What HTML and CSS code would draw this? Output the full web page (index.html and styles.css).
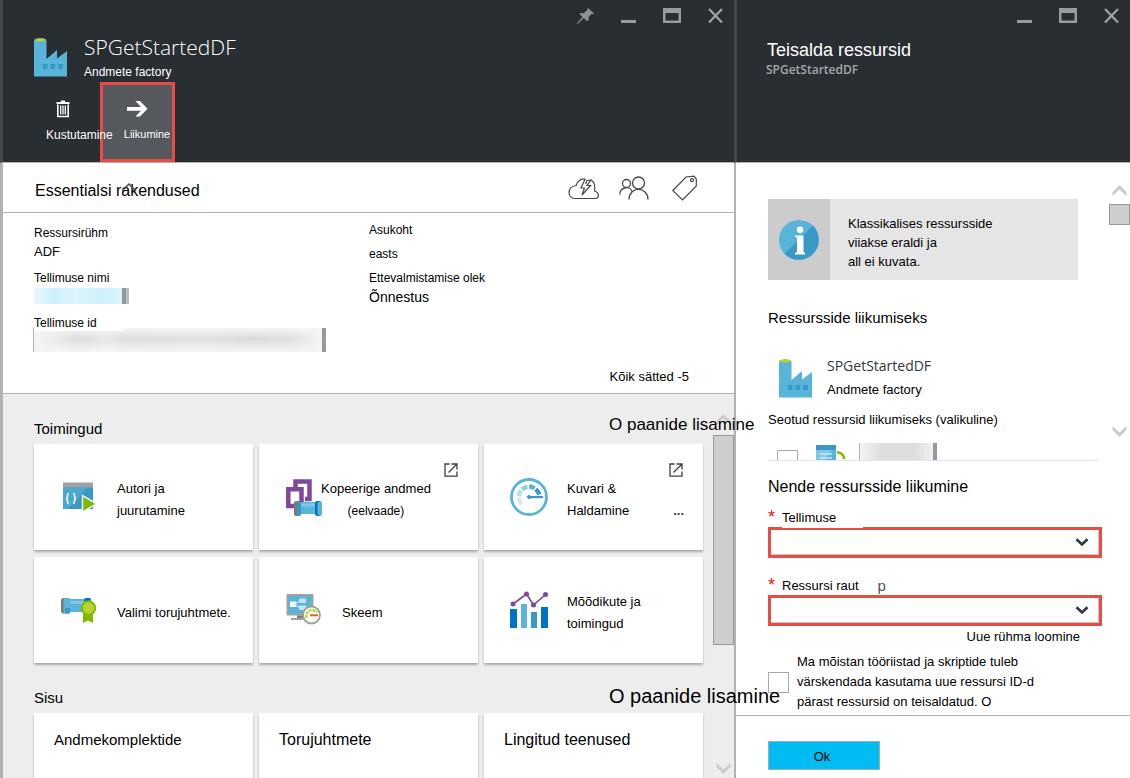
FILE: index.html
```html
<!DOCTYPE html>
<html lang="et">
<head>
<meta charset="utf-8">
<title>SPGetStartedDF</title>
<meta name="viewport" content="width=device-width, initial-scale=1">
<link rel="stylesheet" href="styles.css">
</head>
<body>
<svg class="defs" aria-hidden="true">
  <symbol id="factory" viewBox="0 0 33 39">
    <path fill="#59b4d9" d="M0 3H12.500V21L23 12V20.500L33 13V38.500H0z"/>
    <path fill="#3999c6" d="M9 26h4.500v5H9zM16.500 26H21v5h-4.500zM24 26h5v5h-5z"/>
    <ellipse cx="6.300" cy="2.500" rx="6.300" ry="2.200" fill="#59b4d9"/>
    <ellipse cx="6.300" cy="1.800" rx="5.300" ry="1.600" fill="#b8d432"/>
  </symbol>
  <symbol id="minimize" viewBox="0 0 15 16"><path fill="#999c9e" d="M0 12h15v3H0z"/></symbol>
  <symbol id="maximize" viewBox="0 0 18 16"><path fill="#999c9e" fill-rule="evenodd" d="M0 0h18v15H0zM2.500 5v7.500h13V5z"/></symbol>
  <symbol id="close" viewBox="0 0 15 16"><path fill="none" stroke="#a1a4a6" stroke-width="2.200" d="M1 1L14 14.500M14 1L1 14.500"/></symbol>
  <symbol id="up" viewBox="0 0 15 11"><path fill="currentColor" d="M7.500 0L14.500 7V11L7.500 4.500L.5 11V7z"/></symbol>
  <symbol id="down" viewBox="0 0 15 11"><path fill="currentColor" d="M7.500 11L14.500 4V0L7.500 6.500L.5 0V4z"/></symbol>
  <symbol id="external" viewBox="0 0 14 14"><path fill="none" stroke="#3b4046" stroke-width="1.300" d="M5.500 1H1V13.200H13V8.500M7.500 1H13V6.500M13 1L4.500 9.500"/></symbol>
</svg>
<main class="portal">
  <section class="blade blade-main">
    <header class="blade-head">
      <div class="controls">
        <button aria-label="Kinnita"><svg width="17" height="16" viewBox="0 0 17 16"><path fill="#8f9294" d="M11 0L17 5.500L15.500 6.200L14.800 5.800L11.500 9.200L11.600 12L10.300 13.200L6.800 10L1 15.800L0 16L.5 14.800L5.600 8.900L2.500 5.900L3.600 5L6.600 5.200L10.500 2L10.200 1z"/></svg></button>
        <button aria-label="Minimeeri"><svg width="15" height="16"><use href="#minimize"/></svg></button>
        <button aria-label="Maksimeeri"><svg width="18" height="16"><use href="#maximize"/></svg></button>
        <button aria-label="Sule"><svg width="15" height="16"><use href="#close"/></svg></button>
      </div>
      <div class="title-row">
        <svg width="33" height="39"><use href="#factory"/></svg>
        <div>
          <h1 class="title">SPGetStartedDF</h1>
          <p class="kind">Andmete factory</p>
        </div>
      </div>
      <div class="toolbar">
        <button class="tool tool-delete">
          <svg width="14" height="18" viewBox="0 0 14 18"><path fill="#fff" d="M5 .5h4V2h4.500v2H.5V2H5z"/><path fill="none" stroke="#fff" stroke-width="1.600" d="M1.800 4.500V16.500H12.200V4.500"/><path stroke="#fff" stroke-width="1.300" d="M4.700 5.500v9M7 5.500v9M9.300 5.500v9"/></svg>
          <span>Kustutamine</span>
        </button>
        <button class="tool tool-move">
          <svg width="21" height="18" viewBox="0 0 21 18"><path fill="#fff" d="M0 7H14L8.500 1H13L20.500 8.800L13 16.500H8.500L14 10.800H0z"/></svg>
          <span>Liikumine</span>
        </button>
      </div>
    </header>

    <div class="essentials-bar">
      <h2 class="essentials-title">Essentialsi rakendused
        <svg class="collapse" width="16" height="9" viewBox="0 0 16 9"><path fill="none" stroke="#4a4d52" stroke-width="1.500" d="M1 8L8 1L15 8"/></svg>
      </h2>
      <div class="essentials-icons">
        <svg width="31" height="26" viewBox="0 0 31 26" fill="none" stroke="#44484e" stroke-width="1.200"><path d="M14 23.500H6.500C-.5 23-1.500 12 8 10.500C9 6 13 3.500 17 4.200L13 13H16.500L14 20L22.500 10.500H19L23 5L19 5.500L17.500 9M23.500 5.500C26 7 27.500 10 26.500 16C31.500 17.500 31.500 23 27.500 23.500H14"/></svg>
        <svg width="33" height="26" viewBox="0 0 33 26" fill="none" stroke="#44484e" stroke-width="1.300"><circle cx="7.500" cy="8.500" r="4"/><circle cx="19.500" cy="8" r="6"/><path d="M.8 19.500C1 11 12 11 13 16.500M10 24.500C10 11 29 11 29 24.500"/></svg>
        <svg width="25" height="26" viewBox="0 0 25 26" fill="none" stroke="#44484e" stroke-width="1.200"><path d="M.8 15.500L14 2L22 1.200L24.300 4V11L10.500 25z"/><circle cx="20" cy="5.200" r="1.500"/></svg>
      </div>
    </div>

    <div class="essentials">
      <div class="facts">
        <dl class="facts-col">
          <dt>Ressursirühm</dt><dd class="value-md">ADF</dd>
          <dt class="spaced">Tellimuse nimi</dt><dd class="blur blur-blue"></dd>
          <dt class="tab">Tellimuse id</dt><dd class="blur blur-gray"></dd>
        </dl>
        <dl class="facts-col facts-right">
          <dt>Asukoht</dt><dd class="value-sm">easts</dd>
          <dt class="near">Ettevalmistamise olek</dt><dd class="value-lg">Õnnestus</dd>
        </dl>
      </div>
      <a class="all-settings" href="#">Kõik sätted -5</a>
    </div>

    <div class="lens">
      <div class="lens-content">
        <div class="lens-head"><h2>Toimingud</h2><a class="add-tile" href="#">O paanide lisamine</a></div>
        <div class="tiles">
          <a class="tile" href="#">
            <svg width="40" height="40" viewBox="0 0 40 40"><path fill="#a0a1a2" d="M3 5.500h30V12H3z"/><path fill="#3999c6" d="M3 10.500h30V32H3z"/><path fill="#59b4d9" opacity=".6" d="M3 10.500H28L8 32H3z"/><path fill="none" stroke="#fff" stroke-width="1.600" d="M8.800 16.500C6.500 16.500 8.500 21.500 6 21.500C8.500 21.500 6.500 26.500 8.800 26.500M13.200 16.500C15.500 16.500 13.500 21.500 16 21.500C13.500 21.500 15.500 26.500 13.200 26.500"/><path fill="#7fba00" stroke="#fff" stroke-width="1.400" d="M22.500 18.500L36.500 26.800L22.500 35z"/></svg>
            <span>Autori ja<br>juurutamine</span>
          </a>
          <a class="tile tile-copy" href="#">
            <svg width="40" height="40" viewBox="0 0 40 40"><path fill="none" stroke="#804998" stroke-width="4.500" d="M10.500 11V4.500H24.500V22H20"/><path fill="none" stroke="#804998" stroke-width="4.500" d="M3.300 12.300H16.500V29H3.300z"/><path fill="#59b4d9" d="M10 25h25v12H10z"/><path fill="#83c6e3" d="M13 26.500h19v3H13z"/><rect x="9" y="24" width="5.500" height="15" rx="2" fill="#7a7a7a"/><rect x="12" y="24" width="4" height="15" rx="1.500" fill="#3999c6"/><rect x="30" y="24" width="6.500" height="15" rx="2.500" fill="#0072c6"/><rect x="32.500" y="24.500" width="4.500" height="14" rx="2" fill="#59b4d9"/></svg>
            <span>Kopeerige andmed<br><small>(eelvaade)</small></span>
            <svg class="external" width="14" height="14"><use href="#external"/></svg>
          </a>
          <a class="tile" href="#">
            <svg width="40" height="40" viewBox="0 0 40 40"><circle cx="19" cy="20" r="17.500" fill="#fff" stroke="#59b4d9" stroke-width="2.800"/><g fill="none" stroke-width="4.500"><path stroke="#d3eaf5" d="M11.500 27.500A10.500 10.500 0 0 1 9 21"/><path stroke="#b5dded" d="M9 19.500A10.500 10.500 0 0 1 11 13.500"/><path stroke="#8fcbe5" d="M12 12.500A10.500 10.500 0 0 1 17.500 9.800"/><path stroke="#59b4d9" d="M19 9.600A10.500 10.500 0 0 1 24.500 11.300"/><path stroke="#3999c6" d="M25.700 12.200A10.500 10.500 0 0 1 29.300 17.500"/></g><circle cx="19" cy="20" r="2" fill="#3999c6"/><path fill="#3999c6" d="M19 19h14v2.200H19z"/></svg>
            <span>Kuvari &amp;<br>Haldamine</span>
            <svg class="external" width="14" height="14"><use href="#external"/></svg>
            <b class="more">...</b>
          </a>
          <a class="tile" href="#">
            <svg width="40" height="40" viewBox="0 0 40 40"><path fill="#59b4d9" d="M4 9h27v13H4z"/><path fill="#83c6e3" d="M9 11h20v3H9z"/><rect x="1" y="8" width="6" height="15.500" rx="2.500" fill="#7a7a7a"/><rect x="3.500" y="8" width="7" height="15.500" rx="2" fill="#59b4d9"/><path fill="#3999c6" d="M5 18h5v5.500H5z"/><rect x="24" y="8" width="7" height="6" rx="2" fill="#0072c6"/><path fill="#7fba00" d="M23 24h10v9l-5-2.500L23 33z"/><circle cx="28.500" cy="18" r="6.700" fill="#b8d432" stroke="#7fba00" stroke-width="2"/></svg>
            <span>Valimi torujuhtmete.</span>
          </a>
          <a class="tile" href="#">
            <svg width="40" height="40" viewBox="0 0 40 40"><rect x="1.500" y="4" width="27" height="21.500" rx="1" fill="#a0a1a2"/><path fill="#59b4d9" d="M3.500 6h23v17.500h-23z"/><path fill="#fff" d="M5 11.500h6v5.500H5z"/><path fill="#c5e3f0" d="M14 8.500h7V13h-7zM14 15.500h7V20h-7z"/><path fill="none" stroke="#c5e3f0" stroke-width="1.200" d="M15 10.500L10 14.500L15 18"/><path fill="#7a7a7a" d="M12 25.500h8v3h-8z"/><path fill="#a0a1a2" d="M6 28h14v2H6z"/><circle cx="26.500" cy="25" r="8.500" fill="#fff" stroke="#a0a1a2" stroke-width="1.800"/><path fill="none" stroke="#b8d432" stroke-width="2.500" stroke-dasharray="3 .8" d="M21.500 28A6 6 0 0 1 32 22.500"/><path stroke="#e8611a" stroke-width="2" d="M25 25.300h8"/></svg>
            <span>Skeem</span>
          </a>
          <a class="tile" href="#">
            <svg width="40" height="40" viewBox="0 0 40 40"><path fill="#0072c6" d="M0 19h7v19H0zM31 17h7v21h-7z"/><path fill="#59b4d9" d="M11 14h6v24h-6z"/><path fill="#3999c6" d="M21 22h6v16h-6z"/><path fill="none" stroke="#804998" stroke-width="1.600" d="M3 14L16.500 4L23.500 15L35.500 4.500"/><g fill="#804998"><circle cx="3" cy="14" r="2.500"/><circle cx="16.500" cy="4" r="2.500"/><circle cx="23.500" cy="15" r="2.500"/><circle cx="35.500" cy="4.500" r="2.500"/></g></svg>
            <span>Mõõdikute ja<br>toimingud</span>
          </a>
        </div>
        <div class="lens-head"><h2>Sisu</h2><a class="add-tile add-tile-lg" href="#">O paanide lisamine</a></div>
        <div class="tiles tiles-content">
          <a class="card card-sm" href="#">Andmekomplektide</a>
          <a class="card" href="#">Torujuhtmete</a>
          <a class="card" href="#">Lingitud teenused</a>
        </div>
      </div>
      <div class="scroll scroll-main" aria-hidden="true">
        <svg width="15" height="11"><use href="#up"/></svg>
        <i class="thumb"></i>
        <svg width="15" height="11"><use href="#down"/></svg>
      </div>
    </div>
  </section>

  <section class="blade blade-move">
    <header class="blade-head">
      <div class="controls">
        <button aria-label="Minimeeri"><svg width="15" height="16"><use href="#minimize"/></svg></button>
        <button aria-label="Maksimeeri"><svg width="18" height="16"><use href="#maximize"/></svg></button>
        <button aria-label="Sule"><svg width="15" height="16"><use href="#close"/></svg></button>
      </div>
      <h1 class="move-title">Teisalda ressursid</h1>
      <p class="move-sub">SPGetStartedDF</p>
    </header>

    <div class="move-body">
      <div class="move-list">
        <div class="notice">
          <div class="notice-icon">
            <svg width="40" height="40" viewBox="0 0 40 40"><circle cx="20" cy="20" r="20" fill="#59b4d9"/><path fill="#3999c6" d="M33.800 5.500A20 20 0 1 1 5.500 33.800z"/><circle cx="21" cy="9.800" r="3.200" fill="#fff"/><path fill="#fff" d="M16 15.500h8.500V32l1.500 1v1.500H16V33l2-1V17.500l-2-.5z"/></svg>
          </div>
          <p>Klassikalises ressursside<br>viiakse eraldi ja<br>all ei kuvata.</p>
        </div>
        <h2 class="list-title">Ressursside liikumiseks</h2>
        <div class="resource">
          <svg width="33" height="39"><use href="#factory"/></svg>
          <div><p class="resource-name">SPGetStartedDF</p><p>Andmete factory</p></div>
        </div>
        <h3 class="related-title">Seotud ressursid liikumiseks (valikuline)</h3>
        <div class="related">
          <input class="check" type="checkbox" aria-label="Seotud ressurss">
          <svg width="30" height="24" viewBox="0 0 30 24"><path fill="#3999c6" d="M0 2h20v6H0z"/><path fill="#59b4d9" d="M0 7h20v17H0z"/><path fill="#83c6e3" d="M0 7h16L4 24H0z"/><path stroke="#fff" stroke-width="1.200" d="M4 11h12M4 15h12"/><path fill="none" stroke="#7fba00" stroke-width="2.500" d="M21 9.500C25 9 28 12 28 16"/></svg>
          <i class="blur blur-item"></i>
        </div>
      </div>
      <div class="scroll scroll-move" aria-hidden="true">
        <svg width="15" height="11"><use href="#up"/></svg>
        <i class="thumb"></i>
        <svg width="15" height="11"><use href="#down"/></svg>
      </div>
    </div>

    <form class="move-form">
      <h2 class="form-title">Nende ressursside liikumine</h2>
      <div class="label-row"><span class="star">*</span><label class="patch" for="sub">Tellimuse</label></div>
      <div class="picker"><select id="sub"><option></option></select><svg width="14" height="9" viewBox="0 0 14 9"><path fill="none" stroke="#32383e" stroke-width="2.600" d="M1.500 1.200L7 6.500L12.500 1.200"/></svg></div>
      <div class="label-row label-next"><span class="star">*</span><label for="group">Ressursi raut</label><span class="tail">p</span></div>
      <div class="picker"><select id="group"><option></option></select><svg width="14" height="9" viewBox="0 0 14 9"><path fill="none" stroke="#32383e" stroke-width="2.600" d="M1.500 1.200L7 6.500L12.500 1.200"/></svg></div>
      <a class="new-group" href="#">Uue rühma loomine</a>
      <div class="consent">
        <input class="check" id="consent" type="checkbox">
        <label for="consent">Ma mõistan tööriistad ja skriptide tuleb<br>värskendada kasutama uue ressursi ID-d<br>pärast ressursid on teisaldatud. O</label>
      </div>
    </form>
    <footer class="move-foot"><button class="ok">Ok</button></footer>
  </section>
</main>
</body>
</html>
```
FILE: styles.css
```css
* { box-sizing: border-box; }
body { margin: 0; font: 13px/18px "Liberation Sans", Arial, sans-serif; color: #000; background: #fff; }
h1, h2, h3, p, dl, dd { margin: 0; font-weight: 400; }
a { color: inherit; text-decoration: none; }
button { border: 0; padding: 0; background: none; color: inherit; font: inherit; }
svg { display: block; flex: none; }
.defs { position: absolute; width: 0; height: 0; }

.portal { display: grid; grid-template-columns: minmax(0, 1fr) 396px; min-height: 100vh; overflow: hidden; }
.blade { display: flex; flex-direction: column; min-width: 0; }
.blade-main { border-left: 3px solid #b2b2b2; }
.blade-move { border-left: 2px solid #b2b2b2; }

.blade-head { min-height: 163px; padding-top: 8px; background: #292e32; border-bottom: 1px solid #b2b2b2; color: #fff; }
.blade-main .blade-head { margin-left: -3px; border-left: 3px solid #43474b; }
.blade-move .blade-head { margin-left: -2px; border-left: 3px solid #43474b; }
.controls { display: flex; justify-content: flex-end; gap: 27px; padding-right: 11px; }
.title-row { display: flex; align-items: center; gap: 17px; margin-top: 9px; padding-left: 31px; }
.title { font: 300 21px/28px "Open Sans", sans-serif; }
.kind { margin-top: 2px; font-size: 12px; }
.toolbar { display: flex; margin-top: 1px; padding-left: 43px; }
.tool { display: flex; flex-direction: column; height: 80px; white-space: nowrap; }
.tool-delete { position: relative; z-index: 1; width: 54px; padding: 18px 0 0; gap: 8px; font-size: 12px; }
.tool-delete svg { margin-left: 10px; }
.tool-move { width: 75px; padding: 15px 0 0 19px; gap: 7px; border: 3px solid #e84c44; background: #55585d; font-size: 11px; }
.tool-move svg { margin-left: 5px; }

.essentials-bar { display: flex; justify-content: space-between; align-items: center; min-height: 50px; padding: 0 37px 0 32px; border-bottom: 1px solid #b2b2b2; }
.essentials-title { position: relative; padding-top: 6px; font-size: 16px; line-height: 20px; }
.collapse { position: absolute; left: 86px; top: 8px; }
.essentials-icons { display: flex; gap: 20px; }

.essentials { padding: 8px 45px 7px 31px; border-bottom: 1px solid #b2b2b2; }
.facts { display: grid; grid-template-columns: 335px 1fr; }
.facts-col { padding-top: 3px; }
.facts-right { padding-top: 0; }
dt { font-size: 12px; }
.value-md { font-size: 13px; line-height: 20px; }
.value-sm { margin-top: 6px; font-size: 12px; }
.value-lg { font-size: 14px; line-height: 20px; }
.spaced { margin-top: 7px; }
.near { margin-top: 6px; }
.tab { position: relative; width: 90px; margin: 11px 0 -3px; line-height: 16px; background: #fff; }
.blur-blue { width: 95px; height: 16px; margin-top: 1px; border-right: 3px solid #bfbfbf; background: linear-gradient(#8a9ca1, #8a9ca1) right / 4px 100% no-repeat, linear-gradient(90deg, #e6f7fc, #cdf0fa 22%, #def5fb 45%, #cdf0fa 70%, #dff3fa); }
.blur-gray { width: 293px; height: 24px; margin-left: -1px; border-left: 1px solid #b2b2b2; border-right: 4px solid #999; background: linear-gradient(#f5f5f5, rgba(245, 245, 245, 0) 45%, #f5f5f5), linear-gradient(90deg, #f5f5f5, #dcdddf 15%, #dfe0e2 20%, #e8e8e9 25%, #dcdddf 32%, #e0e1e2 60%, #d8d9db 76%, #dedfe0 90%, #f5f5f5); }
.all-settings { display: block; width: max-content; margin: 16px 0 0 auto; }

.lens { display: flex; flex: 1; background: #ededed; }
.lens-content { display: flex; flex: 1; flex-direction: column; min-width: 0; padding: 0 10px 0 31px; }
.lens-head { display: flex; justify-content: space-between; align-items: flex-start; padding: 21px 0 5px; }
.lens-head h2 { padding-top: 4px; font-size: 15px; line-height: 20px; }
.add-tile { position: relative; z-index: 2; flex: 0 0 94px; min-width: 0; font-size: 17px; line-height: 20px; white-space: nowrap; }
.add-tile-lg { font-size: 20px; line-height: 24px; }
.tiles { display: grid; grid-template-columns: repeat(3, minmax(0, 1fr)); gap: 7px 6px; }
.tiles-content { flex: 1; min-height: 65px; }
.tile, .card { position: relative; background: #fff; box-shadow: 0 2px 2px rgba(0, 0, 0, .28); }
.tile { display: flex; align-items: center; gap: 17px; min-height: 106px; padding-left: 26px; line-height: 22px; }
.tile span { padding-top: 5px; }
.tile-copy { gap: 0; }
.tile-copy span { margin-left: -4px; text-align: center; white-space: nowrap; }
.tile small { font-size: 12px; }
.external { position: absolute; right: 20px; top: 19px; }
.more { position: absolute; right: 19px; top: 56px; color: #333; }
.card { padding: 17px 20px; font-size: 16px; line-height: 20px; }
.card-sm { font-size: 15px; }

.scroll { display: flex; flex: 0 0 21px; flex-direction: column; align-items: center; color: #ccc; }
.thumb { width: 21px; border: 1px solid #999; background: #cdcdcd; }
.scroll-main { padding: 20px 0 4px; }
.scroll-main .thumb { height: 210px; margin: 10px 0 auto; }
.scroll-move { padding: 22px 0 24px; }
.scroll-move .thumb { height: 21px; margin: 8px 0 auto; }

.move-title { margin-top: 14px; padding-left: 30px; font-size: 18px; line-height: 24px; }
.move-sub { padding-left: 29px; color: #a5a8aa; font: 600 12px/16px "Open Sans", sans-serif; }
.move-body { display: flex; justify-content: space-between; }
.move-list { flex: 1; padding: 36px 10px 0 32px; }
.notice { display: flex; margin-right: 21px; background: #e5e5e5; line-height: 19px; }
.notice-icon { display: flex; align-items: center; justify-content: center; flex: 0 0 62px; background: #ccc; }
.notice p { padding: 15px 18px 9px; }
.list-title { margin-top: 28px; font-size: 15px; line-height: 20px; }
.resource { display: flex; align-items: center; gap: 15px; margin-top: 26px; padding-left: 11px; line-height: 24px; }
.resource-name { color: #33373c; font: 14px/24px "Open Sans", sans-serif; }
.related-title { margin-top: 9px; font-size: 13px; line-height: 18px; }
.related { display: flex; height: 18px; margin-top: 14px; padding-left: 9px; overflow: hidden; border-bottom: 1px solid #e4e4f4; }
.related .check { margin-top: 7px; }
.related svg { margin-left: 18px; }
.blur-item { height: 24px; width: 78px; margin-left: 13px; border-left: 1px solid #b2b2b2; border-right: 4px solid #999; background: linear-gradient(90deg, #f4f4f4, #dcdddf 30%, #dcdddf 75%, #f0f0f0); }
.check { appearance: none; flex: none; width: 21px; height: 21px; margin: 0; border: 1px solid #a8a8a8; background: #fff; }

.move-form { padding: 16px 28px 3px 32px; }
.form-title { font-size: 16px; line-height: 20px; }
.label-row { display: flex; height: 18px; margin-top: 12px; }
.label-next { margin-top: 19px; }
.star { width: 14px; color: #e81123; font-size: 18px; line-height: 16px; }
.patch { position: relative; z-index: 1; width: 81px; height: 19px; background: #fff; }
.tail { margin-left: 19px; color: #555; font-size: 15px; }
.picker { position: relative; }
.picker select { display: block; appearance: none; width: 100%; height: 31px; border: 3px solid #e84c44; border-radius: 0; background: #fff; box-shadow: inset -1px -1px #c4c4c4; }
.picker svg { position: absolute; right: 13px; top: 11px; pointer-events: none; }
.new-group { display: block; width: max-content; margin: 2px 22px 0 auto; }
.consent { display: flex; align-items: center; gap: 8px; margin-top: 6px; line-height: 20px; }
.move-foot { flex: 1; padding: 25px 32px 8px; border-top: 1px solid #b2b2b2; }
.ok { display: block; width: 112px; height: 29px; border: 1px solid #8fb4c0; background: #00bcf2; padding-right: 4px; padding-top: 3px; }
```
